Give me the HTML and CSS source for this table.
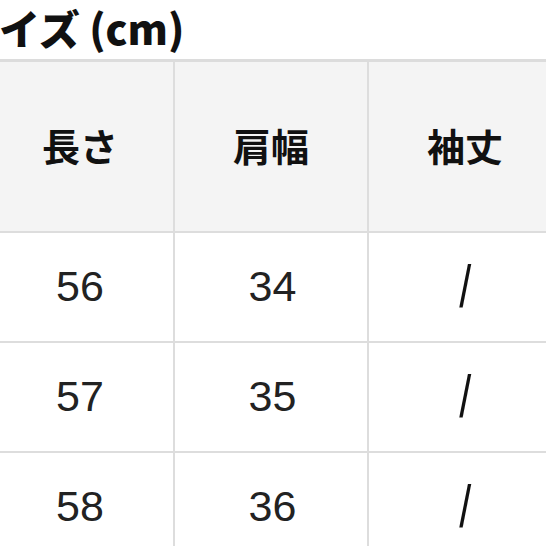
FILE: index.html
```html
<!DOCTYPE html>
<html lang="ja">
<head>
<meta charset="utf-8">
<link rel="stylesheet" href="styles.css">
</head>
<body>
<div class="page">
  <h1 class="title">サイズ (cm)</h1>
  <table class="size-table">
    <thead>
      <tr><th>長さ</th><th>肩幅</th><th>袖丈</th></tr>
    </thead>
    <tbody>
      <tr><td>56</td><td>34</td><td><span class="slash">/</span></td></tr>
      <tr><td>57</td><td>35</td><td><span class="slash">/</span></td></tr>
      <tr><td>58</td><td>36</td><td><span class="slash">/</span></td></tr>
    </tbody>
  </table>
</div>
</body>
</html>
```

FILE: styles.css
```css
html, body {
  margin: 0;
  padding: 0;
  background: #ffffff;
  overflow: hidden;
  width: 546px;
  height: 546px;
}
.page {
  width: 546px;
  height: 546px;
  overflow: hidden;
}
.title {
  margin: 0 0 0 -42px;
  height: 59px;
  font-family: "Noto Sans CJK JP", "Noto Sans", sans-serif;
  font-weight: 900;
  font-size: 41px;
  line-height: 54px;
  color: #111111;
  white-space: nowrap;
}
.size-table {
  margin-left: -21px;
  border-collapse: collapse;
  table-layout: fixed;
  width: 584px;
}
.size-table th,
.size-table td {
  width: 192px;
  border: 2px solid #dddddd;
  text-align: center;
  padding: 0;
  box-sizing: border-box;
}
.size-table th:first-child,
.size-table td:first-child {
  padding-left: 6px;
}
.size-table td:nth-child(2) {
  padding-left: 3px;
}
.size-table thead tr th {
  border-top: 3px solid #dcdcdc;
}
.size-table th {
  height: 171px;
  background: #f4f4f4;
  font-family: "Noto Sans CJK JP", sans-serif;
  font-weight: 700;
  font-size: 38px;
  color: #111111;
  vertical-align: middle;
  padding-bottom: 4px;
}
.size-table td {
  height: 110px;
  background: #ffffff;
  font-family: "Liberation Sans", Arial, sans-serif;
  font-size: 43px;
  font-weight: 400;
  color: #222222;
}
.slash {
  display: inline-block;
  font-size: 60px;
  line-height: 1;
  transform: scaleX(0.72);
  color: #111111;
}
```
